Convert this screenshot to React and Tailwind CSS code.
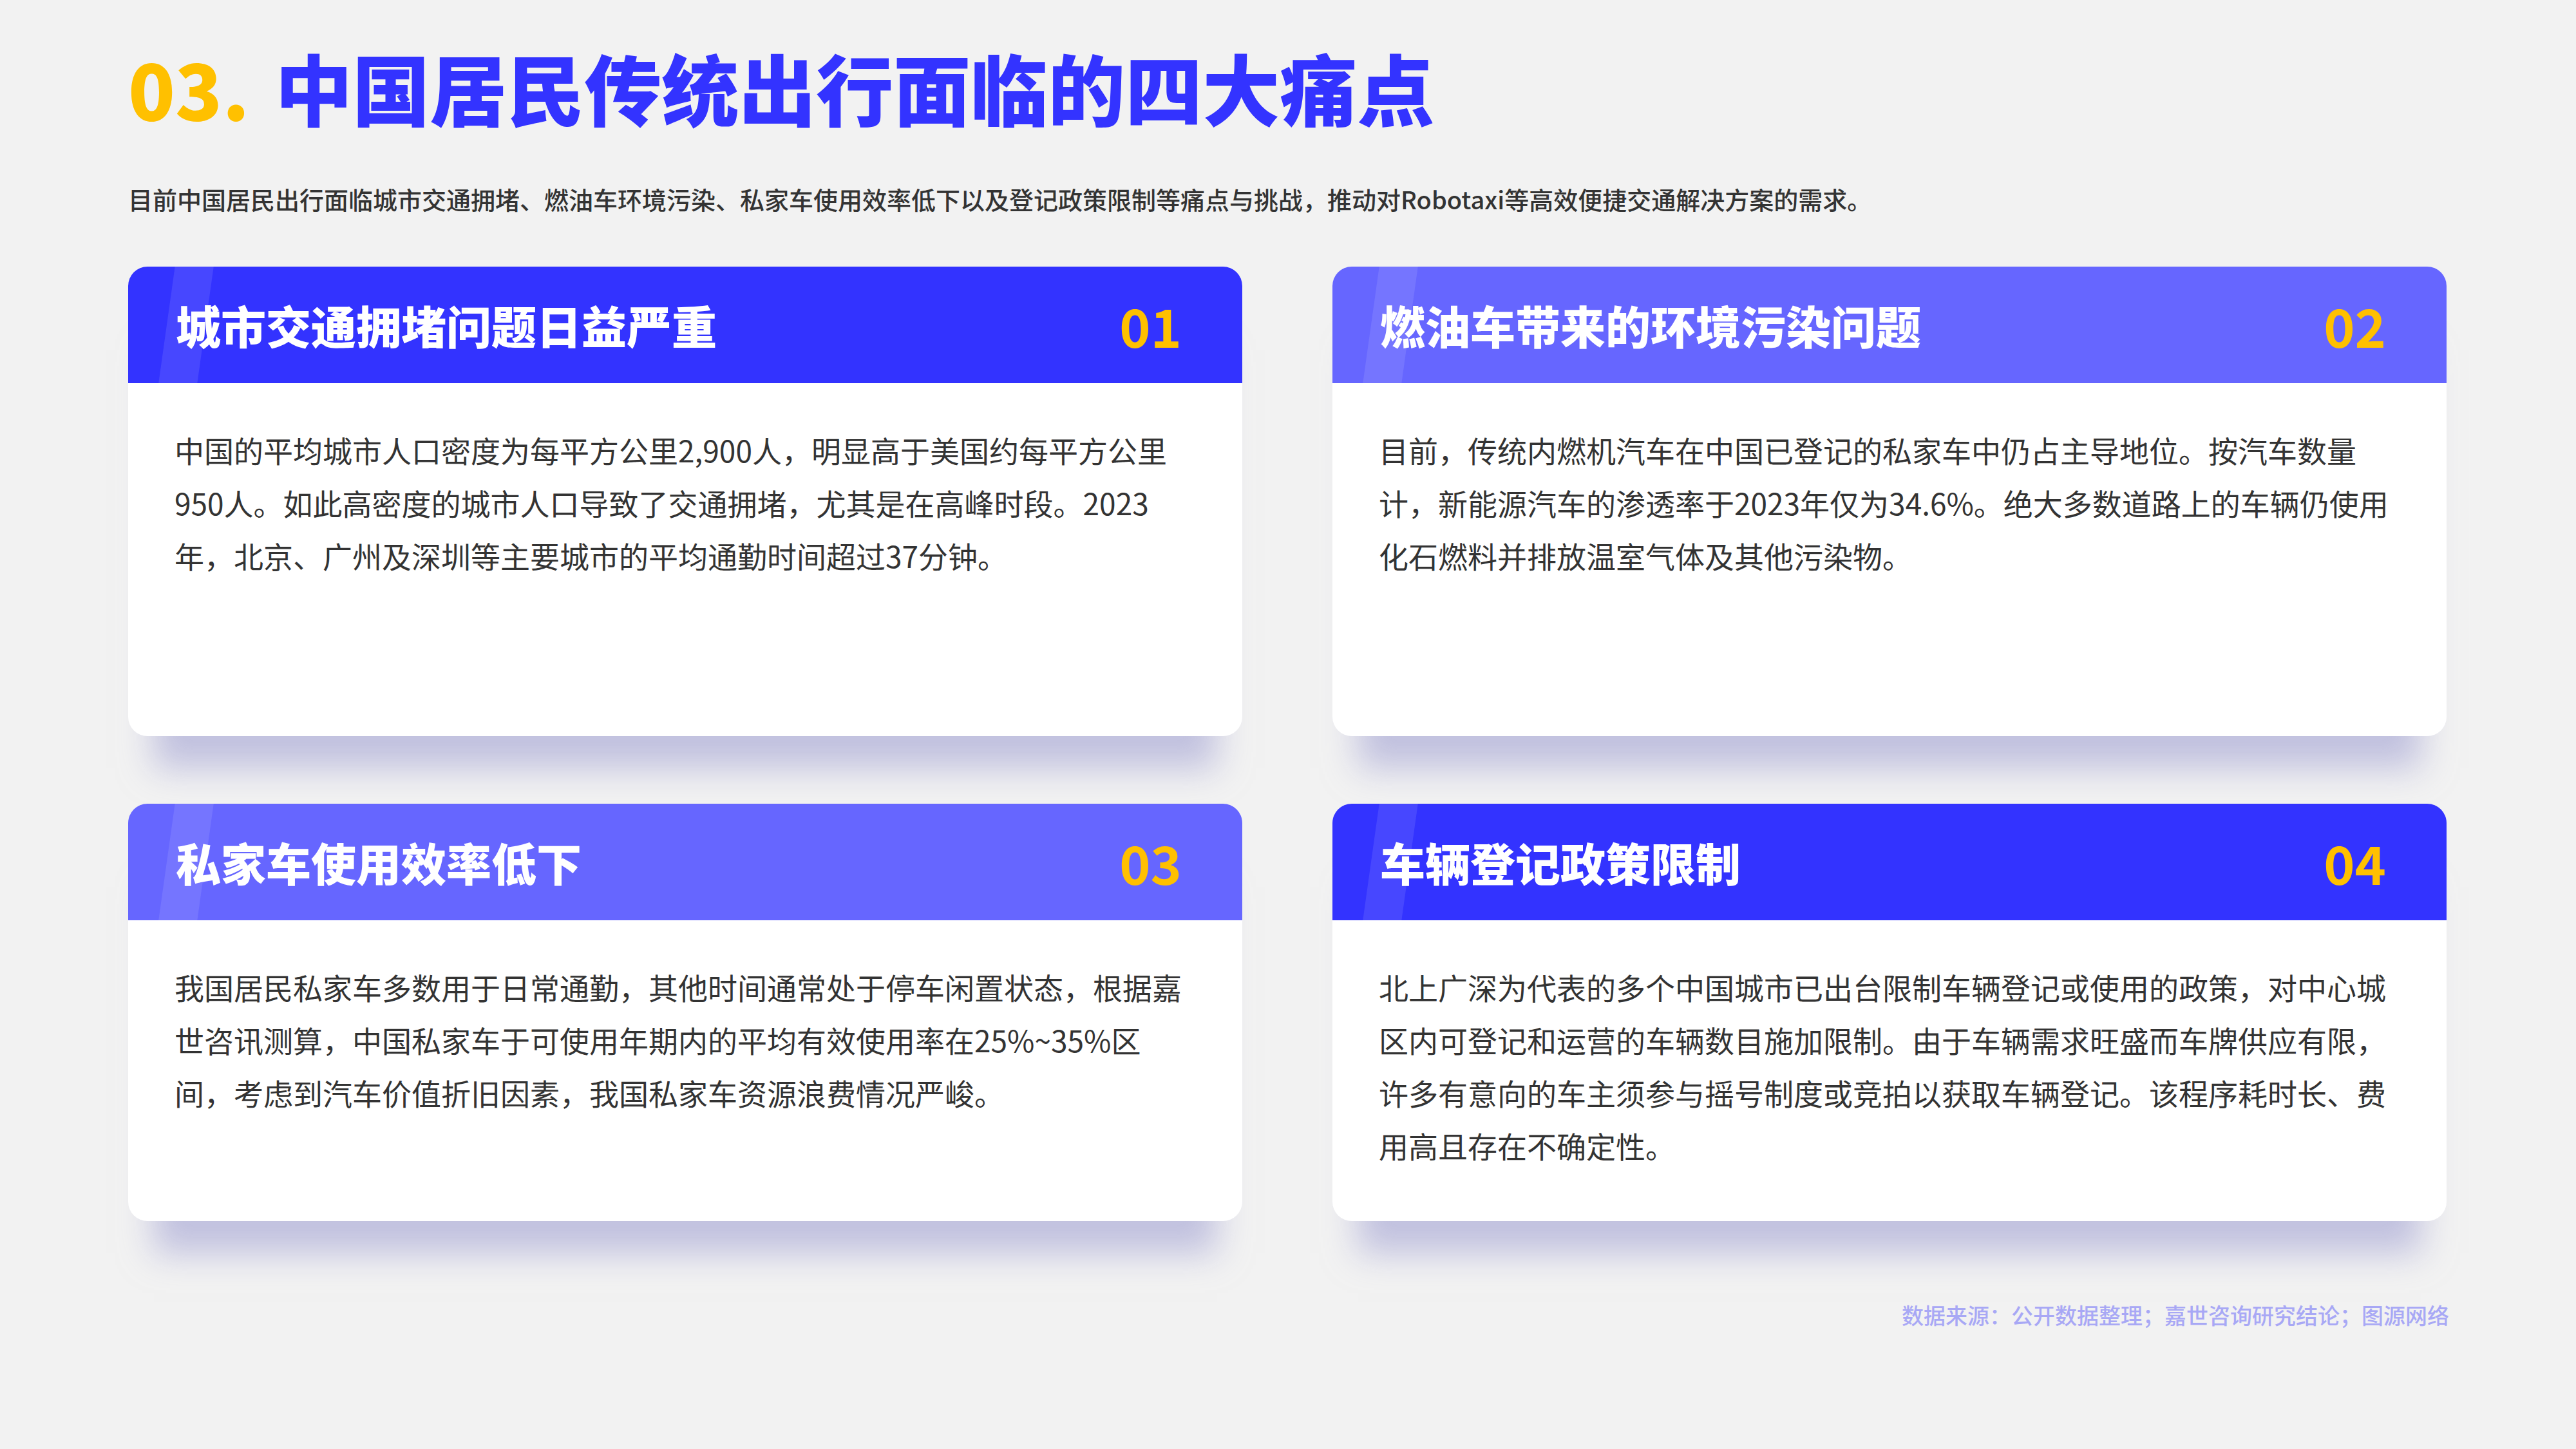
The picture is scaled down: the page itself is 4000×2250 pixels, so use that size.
const cards = [
  {
    title: "城市交通拥堵问题日益严重",
    num: "01",
    head: "bg-[#3333ff]",
    text: "中国的平均城市人口密度为每平方公里2,900人，明显高于美国约每平方公里950人。如此高密度的城市人口导致了交通拥堵，尤其是在高峰时段。2023年，北京、广州及深圳等主要城市的平均通勤时间超过37分钟。",
  },
  {
    title: "燃油车带来的环境污染问题",
    num: "02",
    head: "bg-[#6666ff]",
    text: "目前，传统内燃机汽车在中国已登记的私家车中仍占主导地位。按汽车数量计，新能源汽车的渗透率于2023年仅为34.6%。绝大多数道路上的车辆仍使用化石燃料并排放温室气体及其他污染物。",
  },
  {
    title: "私家车使用效率低下",
    num: "03",
    head: "bg-[#6666ff]",
    text: "我国居民私家车多数用于日常通勤，其他时间通常处于停车闲置状态，根据嘉世咨讯测算，中国私家车于可使用年期内的平均有效使用率在25%~35%区间，考虑到汽车价值折旧因素，我国私家车资源浪费情况严峻。",
  },
  {
    title: "车辆登记政策限制",
    num: "04",
    head: "bg-[#3333ff]",
    text: "北上广深为代表的多个中国城市已出台限制车辆登记或使用的政策，对中心城区内可登记和运营的车辆数目施加限制。由于车辆需求旺盛而车牌供应有限，许多有意向的车主须参与摇号制度或竞拍以获取车辆登记。该程序耗时长、费用高且存在不确定性。",
  },
];

export default function App() {
  return (
    <div
      className="w-[4000px] h-[2250px] bg-[#f2f2f2] px-[199px] pt-[60px] overflow-hidden"
      style={{ fontFamily: '"Noto Sans CJK SC", "Noto Sans", sans-serif' }}
    >
      <h1 className="flex items-center h-[150px] text-[120px] font-black leading-none">
        <span className="text-[#ffc000] mr-[40px]">03.</span>
        <span className="text-[#3333ff]">中国居民传统出行面临的四大痛点</span>
      </h1>
      <p className="mt-[80px] text-[38px] font-medium text-[#333] leading-none">
        目前中国居民出行面临城市交通拥堵、燃油车环境污染、私家车使用效率低下以及登记政策限制等痛点与挑战，推动对Robotaxi等高效便捷交通解决方案的需求。
      </p>
      <div className="mt-[86px] grid grid-cols-2 gap-x-[140px] gap-y-[105px] w-[3600px]">
        {cards.map((c, i) => (
          <div
            key={c.num}
            className={`rounded-[30px] bg-white overflow-hidden shadow-[0_90px_50px_-40px_rgba(160,160,210,0.6)] ${i < 2 ? "h-[729px]" : "h-[648px]"}`}
          >
            <div className={`relative h-[181px] ${c.head} flex items-center justify-between pl-[74px] pr-[94px] overflow-hidden`}>
              <div className="absolute left-[60px] top-0 h-full w-[60px] bg-white/10 skew-x-[-8deg]" />
              <span className="relative text-white text-[70px] font-black">{c.title}</span>
              <span className="relative text-[#ffc000] text-[82px] font-bold">{c.num}</span>
            </div>
            <p className="px-[72px] pt-[62px] text-[46px] leading-[82px] text-[#333]">{c.text}</p>
          </div>
        ))}
      </div>
      <p className="mt-[120px] w-[3604px] text-right text-[34px] text-[#a8a8f5] font-medium">
        数据来源：公开数据整理；嘉世咨询研究结论；图源网络
      </p>
    </div>
  );
}
